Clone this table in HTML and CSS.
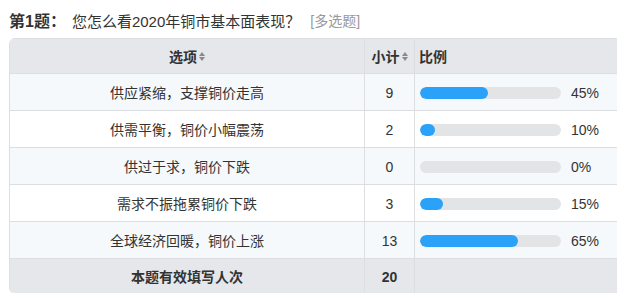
FILE: index.html
```html
<!DOCTYPE html>
<html lang="zh-CN">
<head>
<meta charset="utf-8">
<title>第1题</title>
<link rel="stylesheet" href="styles.css">
</head>
<body>
<div class="page">
  <div class="title">
    <span class="qno">第1题：</span>
    <span class="qtext">您怎么看2020年铜市基本面表现？</span>
    <span class="qtype">[多选题]</span>
  </div>
  <div class="table">
    <div class="row head">
      <div class="cell c1"><b>选项</b><span class="sort"><i class="up"></i><i class="down"></i></span></div>
      <div class="cell c2"><b>小计</b><span class="sort"><i class="up"></i><i class="down"></i></span></div>
      <div class="cell c3 left"><b>比例</b></div>
    </div>
    <div class="row odd">
      <div class="cell c1">供应紧缩，支撑铜价走高</div>
      <div class="cell c2">9</div>
      <div class="cell c3 left"><div class="bar"><div class="fill" style="width:67.5px"></div></div><span class="pct">45%</span></div>
    </div>
    <div class="row">
      <div class="cell c1">供需平衡，铜价小幅震荡</div>
      <div class="cell c2">2</div>
      <div class="cell c3 left"><div class="bar"><div class="fill" style="width:15px"></div></div><span class="pct">10%</span></div>
    </div>
    <div class="row odd">
      <div class="cell c1">供过于求，铜价下跌</div>
      <div class="cell c2">0</div>
      <div class="cell c3 left"><div class="bar"></div><span class="pct">0%</span></div>
    </div>
    <div class="row">
      <div class="cell c1">需求不振拖累铜价下跌</div>
      <div class="cell c2">3</div>
      <div class="cell c3 left"><div class="bar"><div class="fill" style="width:22.5px"></div></div><span class="pct">15%</span></div>
    </div>
    <div class="row odd">
      <div class="cell c1">全球经济回暖，铜价上涨</div>
      <div class="cell c2">13</div>
      <div class="cell c3 left"><div class="bar"><div class="fill" style="width:97.5px"></div></div><span class="pct">65%</span></div>
    </div>
    <div class="row foot">
      <div class="cell c1"><b>本题有效填写人次</b></div>
      <div class="cell c2"><b>20</b></div>
      <div class="cell c3 left"></div>
    </div>
  </div>
</div>
</body>
</html>
```
FILE: styles.css
```css
html, body {
  margin: 0;
  padding: 0;
  overflow: hidden;
  background: #ffffff;
}
body {
  font-family: "Liberation Sans", "Noto Sans CJK SC", sans-serif;
  color: #333333;
  width: 617px;
  height: 293px;
}
.page {
  padding: 10px 0 0 9px;
}
.title {
  display: flex;
  align-items: center;
  height: 20px;
  margin-bottom: 8px;
  white-space: nowrap;
}
.qno {
  font-size: 16px;
  font-weight: bold;
  color: #333333;
  margin-right: 6px;
}
.qtext {
  font-size: 15px;
  color: #333333;
}
.qtype {
  font-size: 14px;
  color: #999999;
  margin-left: 10px;
}
.table {
  width: 640px;
  border: 1px solid #dcdee2;
  border-radius: 6px;
  overflow: hidden;
}
.row {
  display: grid;
  grid-template-columns: 355px 50px 1fr;
  border-bottom: 1px solid #dcdee2;
  background: #ffffff;
}
.row.odd {
  background: #f5f9fc;
}
.row.head, .row.foot {
  background: #e5e7eb;
}
.row.foot {
  border-bottom: none;
}
.cell {
  display: flex;
  align-items: center;
  justify-content: center;
  font-size: 14px;
  line-height: 16px;
  height: 36px;
  padding-top: 2px;
  box-sizing: border-box;
  border-right: 1px solid #dcdee2;
  white-space: nowrap;
}
.head .cell {
  height: 34px;
  padding-top: 1px;
}
.foot .cell {
  height: 34px;
  padding-top: 2px;
}
.cell.left {
  justify-content: flex-start;
  padding-left: 5px;
  border-right: none;
}
.head .cell.left {
  padding-left: 4px;
}
.cell b {
  font-weight: bold;
  color: #333333;
}
.sort {
  display: inline-flex;
  flex-direction: column;
  gap: 1px;
  margin-left: 2px;
}
.sort i {
  display: block;
  width: 0;
  height: 0;
  border-left: 3px solid transparent;
  border-right: 3px solid transparent;
}
.sort .up {
  border-bottom: 4px solid #8a8a8a;
}
.sort .down {
  border-top: 4px solid #8a8a8a;
}
.bar {
  width: 141px;
  height: 12px;
  border-radius: 6px;
  background: #e3e4e6;
  overflow: hidden;
  flex: none;
}
.fill {
  height: 100%;
  border-radius: 6px;
  background: #2ba2f9;
}
.pct {
  margin-left: 10px;
  font-size: 14px;
  color: #333333;
}
```
